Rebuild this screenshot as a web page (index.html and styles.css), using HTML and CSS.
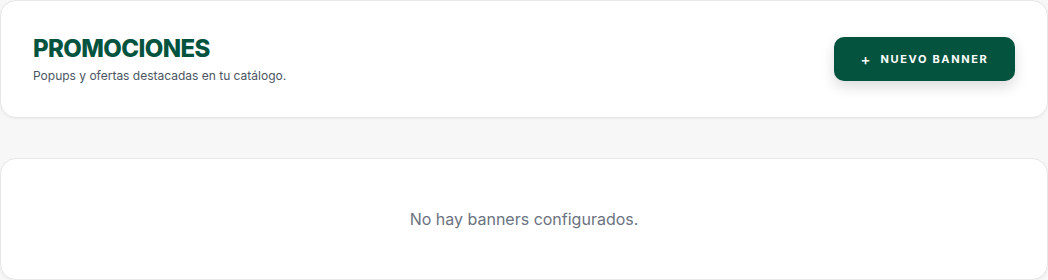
FILE: index.html
```html
<!DOCTYPE html>
<html lang="es">
<head>
    <meta charset="UTF-8">
    <meta name="viewport" content="width=device-width, initial-scale=1.0">
    <title>Promociones</title>
    <link rel="stylesheet" href="styles.css">
</head>
<body>
    <div class="page">
        <header class="card header">
            <div class="heading">
                <h1 class="title">PROMOCIONES</h1>
                <p class="subtitle">Popups y ofertas destacadas en tu catálogo.</p>
            </div>
            <button class="btn-primary">
                <span class="plus">+</span>
                Nuevo banner
            </button>
        </header>

        <section class="card empty">
            <p>No hay banners configurados.</p>
        </section>
    </div>
</body>
</html>
```
FILE: styles.css
```css
body {
    margin: 0;
    background-color: #f6f7f6;
    font-family: 'Inter', 'Noto Sans', sans-serif;
}

.page {
    display: flex;
    flex-direction: column;
    gap: 40px;
}

.card {
    background-color: #fff;
    border: 1px solid #e6e8e7;
    border-radius: 16px;
    box-shadow: 0 1px 3px rgba(0,0,0,0.05);
}

.header {
    display: flex;
    justify-content: space-between;
    align-items: center;
    padding: 33px 32px;
    height: 50px;
}

.title {
    margin: 0;
    font-size: 24px;
    line-height: 28px;
    font-weight: 800;
    letter-spacing: -0.6px;
    color: #04533f;
}

.subtitle {
    margin: 5px 0 0;
    font-size: 12px;
    line-height: 16px;
    color: #4b5563;
}

.btn-primary {
    display: flex;
    align-items: center;
    justify-content: center;
    gap: 10px;
    height: 44px;
    width: 181px;
    background-color: #04533f;
    color: #fff;
    border: none;
    border-radius: 10px;
    font-family: 'Inter', sans-serif;
    font-size: 11px;
    font-weight: 700;
    letter-spacing: 1.65px;
    text-transform: uppercase;
    box-shadow: 0 6px 14px rgba(0,0,0,0.14);
    cursor: pointer;
}

.plus {
    font-size: 15px;
    font-weight: 500;
    letter-spacing: 0;
}

.empty {
    height: 120px;
    display: flex;
    align-items: center;
    justify-content: center;
}

.empty p {
    margin: 0;
    font-size: 16px;
    color: #6b7280;
}
```
